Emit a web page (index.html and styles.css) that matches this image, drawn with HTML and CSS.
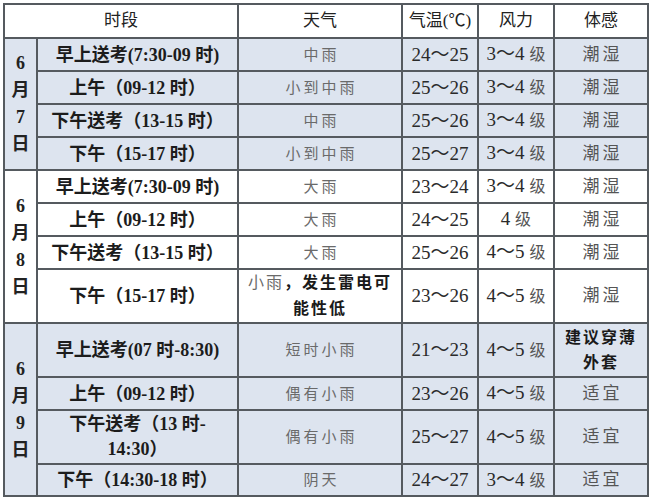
FILE: index.html
```html
<!DOCTYPE html>
<html lang="zh">
<head>
<meta charset="utf-8">
<link rel="stylesheet" href="styles.css">
</head>
<body>
<table class="wx">
  <colgroup>
    <col class="c-date"><col class="c-time"><col class="c-wx"><col class="c-temp"><col class="c-wind"><col class="c-feel">
  </colgroup>
  <thead>
    <tr class="r-head">
      <th colspan="2">时段</th>
      <th>天气</th>
      <th>气温(℃)</th>
      <th>风力</th>
      <th>体感</th>
    </tr>
  </thead>
  <tbody class="blue">
    <tr class="r33">
      <td class="date" rowspan="4"><span>6</span><span>月</span><span>7</span><span>日</span></td>
      <td class="time">早上送考(7:30-09 时)</td>
      <td class="wx-t">中雨</td><td class="num">24～25</td><td class="num">3～4 <span class="ji">级</span></td><td class="feel">潮湿</td>
    </tr>
    <tr class="r33">
      <td class="time">上午（09-12 时）</td>
      <td class="wx-t">小到中雨</td><td class="num">25～26</td><td class="num">3～4 <span class="ji">级</span></td><td class="feel">潮湿</td>
    </tr>
    <tr class="r33">
      <td class="time">下午送考（13-15 时）</td>
      <td class="wx-t">中雨</td><td class="num">25～26</td><td class="num">3～4 <span class="ji">级</span></td><td class="feel">潮湿</td>
    </tr>
    <tr class="r33">
      <td class="time">下午（15-17 时）</td>
      <td class="wx-t">小到中雨</td><td class="num">25～27</td><td class="num">3～4 <span class="ji">级</span></td><td class="feel">潮湿</td>
    </tr>
  </tbody>
  <tbody class="white">
    <tr class="r33">
      <td class="date" rowspan="4"><span>6</span><span>月</span><span>8</span><span>日</span></td>
      <td class="time">早上送考(7:30-09 时)</td>
      <td class="wx-t">大雨</td><td class="num">23～24</td><td class="num">3～4 <span class="ji">级</span></td><td class="feel">潮湿</td>
    </tr>
    <tr class="r33">
      <td class="time">上午（09-12 时）</td>
      <td class="wx-t">大雨</td><td class="num">24～25</td><td class="num">4 <span class="ji">级</span></td><td class="feel">潮湿</td>
    </tr>
    <tr class="r33">
      <td class="time">下午送考（13-15 时）</td>
      <td class="wx-t">大雨</td><td class="num">25～26</td><td class="num">4～5 <span class="ji">级</span></td><td class="feel">潮湿</td>
    </tr>
    <tr class="r54">
      <td class="time">下午（15-17 时）</td>
      <td class="wx-b"><span class="lite">小雨</span>，发生雷电可能性低</td><td class="num">23～26</td><td class="num">4～5 <span class="ji">级</span></td><td class="feel">潮湿</td>
    </tr>
  </tbody>
  <tbody class="blue">
    <tr class="r54">
      <td class="date" rowspan="4"><span>6</span><span>月</span><span>9</span><span>日</span></td>
      <td class="time">早上送考(07 时-8:30)</td>
      <td class="wx-t">短时小雨</td><td class="num">21～23</td><td class="num">4～5 <span class="ji">级</span></td><td class="feel-b">建议穿薄外套</td>
    </tr>
    <tr class="r33">
      <td class="time">上午（09-12 时）</td>
      <td class="wx-t">偶有小雨</td><td class="num">23～26</td><td class="num">4～5 <span class="ji">级</span></td><td class="feel">适宜</td>
    </tr>
    <tr class="r54">
      <td class="time time-wrap">下午送考（13 时-<br>14:30）</td>
      <td class="wx-t">偶有小雨</td><td class="num">25～27</td><td class="num">4～5 <span class="ji">级</span></td><td class="feel">适宜</td>
    </tr>
    <tr class="r32">
      <td class="time">下午（14:30-18 时）</td>
      <td class="wx-t">阴天</td><td class="num">24～27</td><td class="num">3～4 <span class="ji">级</span></td><td class="feel">适宜</td>
    </tr>
  </tbody>
</table>
</body>
</html>
```

FILE: styles.css
```css
html, body {
  margin: 0;
  padding: 0;
  background: #ffffff;
}
body {
  padding: 3px 0 0 3px;
  font-family: "Liberation Serif", "Noto Sans CJK SC", serif;
  color: #1a1a1a;
}
.wx {
  border-collapse: collapse;
  table-layout: fixed;
  width: 644px;
}
.c-date { width: 33px; }
.c-time { width: 201px; }
.c-wx { width: 164px; }
.c-temp { width: 76px; }
.c-wind { width: 76px; }
.c-feel { width: 94px; }

.wx th, .wx td {
  border: 2px solid #555a5f;
  padding: 0;
  text-align: center;
  vertical-align: middle;
  line-height: 24px;
}
.wx th {
  font-weight: normal;
  font-size: 17px;
  color: #222;
  background: #ffffff;
}
.r-head { height: 34px; }
.r33 { height: 33px; }
.r32 { height: 32px; }
.r54 { height: 54px; }

.blue td { background: #dde4ef; }
.white td { background: #ffffff; }

.date span {
  display: block;
  font-weight: bold;
  font-size: 18px;
  line-height: 27px;
  color: #222;
}
.time {
  font-weight: bold;
  font-size: 18px;
  color: #1c1c1c;
}
.time-wrap { line-height: 25px !important; }
.wx-t {
  font-size: 15px;
  color: #6a6a6a;
  letter-spacing: 3px;
  padding-left: 3px !important;
}
.wx-b {
  font-size: 16px;
  font-weight: bold;
  color: #1a1a1a;
  letter-spacing: 2px;
  line-height: 26px !important;
}
.wx-b .lite {
  font-weight: normal;
  color: #6a6a6a;
}
.num {
  font-size: 19px;
  color: #2a2a2a;
}
.num .ji {
  font-size: 16px;
  color: #555;
}
.feel {
  font-size: 17px;
  color: #555;
  letter-spacing: 3px;
  padding-left: 3px !important;
}
.feel-b {
  font-size: 16px;
  font-weight: bold;
  color: #1a1a1a;
  letter-spacing: 2px;
  line-height: 25px !important;
  padding: 0 6px !important;
}
```
